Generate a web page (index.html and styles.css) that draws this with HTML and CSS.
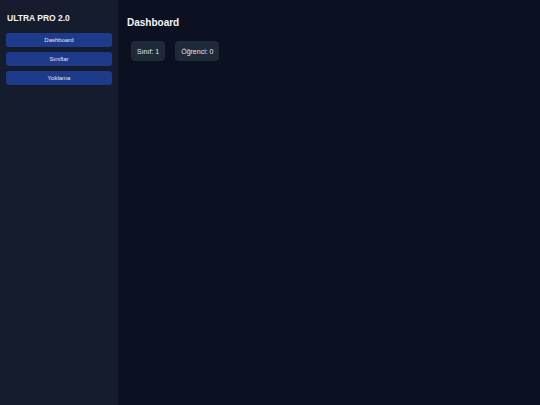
FILE: index.html
```html
<!DOCTYPE html>
<html>
<head>
<meta charset="utf-8">
<link rel="stylesheet" href="styles.css">
</head>
<body>
<div class="app">
  <aside class="sidebar">
    <h2 class="brand">ULTRA PRO 2.0</h2>
    <nav class="nav">
      <button class="nav-btn">Dashboard</button>
      <button class="nav-btn">Sınıflar</button>
      <button class="nav-btn">Yoklama</button>
    </nav>
  </aside>
  <main class="main">
    <h1 class="title">Dashboard</h1>
    <div class="cards">
      <div class="card">Sınıf: 1</div>
      <div class="card">Öğrenci: 0</div>
    </div>
  </main>
</div>
</body>
</html>
```
FILE: styles.css
```css
* { box-sizing: border-box; }
html, body { margin: 0; padding: 0; height: 100%; }
body {
  font-family: "Liberation Sans", Arial, sans-serif;
  background: #0b1120;
  color: #e5e7eb;
}
.app { display: flex; height: 405px; }
.sidebar {
  width: 118px;
  background: #141c2e;
  padding: 12px 6px;
}
.brand {
  margin: 0 0 9px 1px;
  font-size: 8.5px;
  line-height: 12px;
  font-weight: bold;
  color: #f3f4f6;
}
.nav { display: flex; flex-direction: column; gap: 5px; }
.nav-btn {
  height: 14px;
  border: none;
  border-radius: 3px;
  background: #1e3a8a;
  color: #e5e7eb;
  font-family: "Liberation Sans", Arial, sans-serif;
  font-size: 6px;
  padding: 0;
}
.main { flex: 1; padding: 16px 9px; }
.title {
  margin: 0 0 11px 0;
  font-size: 10px;
  line-height: 14px;
  font-weight: bold;
  color: #f3f4f6;
}
.cards { display: flex; gap: 10px; padding-left: 4px; }
.card {
  background: #1f2937;
  border-radius: 4px;
  height: 20px;
  padding: 0 6px;
  display: flex;
  align-items: center;
  font-size: 7px;
  color: #e5e7eb;
}
```
